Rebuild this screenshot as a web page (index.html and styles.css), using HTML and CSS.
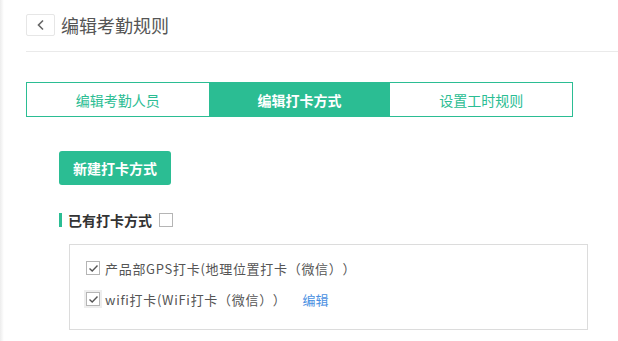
FILE: index.html
```html
<!DOCTYPE html>
<html lang="zh">
<head>
<meta charset="utf-8">
<link rel="stylesheet" href="styles.css">
</head>
<body>
<div class="page">
  <div class="header">
    <span class="back"><svg width="10" height="12" viewBox="0 0 10 12"><path d="M7 1.5 L2.5 6 L7 10.5" fill="none" stroke="#666" stroke-width="1.6"/></svg></span>
    <span class="title">编辑考勤规则</span>
  </div>
  <div class="tabs">
    <div class="tab">编辑考勤人员</div>
    <div class="tab active">编辑打卡方式</div>
    <div class="tab">设置工时规则</div>
  </div>
  <div class="content">
    <button class="btn">新建打卡方式</button>
    <div class="section">
      <span class="bar"></span>
      <span class="label">已有打卡方式</span>
      <span class="cb"></span>
    </div>
    <div class="list">
      <div class="row">
        <span class="cb checked"><svg width="11" height="9" viewBox="0 0 11 9"><path d="M1.5 4.5 L4.2 7 L9.5 1.5" fill="none" stroke="#555" stroke-width="1.4"/></svg></span>
        <span class="text">产品部GPS打卡(地理位置打卡（微信））</span>
      </div>
      <div class="row">
        <span class="cbwrap"><span class="cb checked"><svg width="11" height="9" viewBox="0 0 11 9"><path d="M1.5 4.5 L4.2 7 L9.5 1.5" fill="none" stroke="#555" stroke-width="1.4"/></svg></span></span>
        <span class="text">wifi打卡(WiFi打卡（微信））</span>
        <a class="edit">编辑</a>
      </div>
    </div>
  </div>
</div>
</body>
</html>
```
FILE: styles.css
```css
* { box-sizing: border-box; }
html, body { margin: 0; padding: 0; background: #fff; }
body {
  font-family: "Microsoft YaHei", "Noto Sans CJK SC", "Noto Sans", sans-serif;
  color: #555;
  text-spacing-trim: space-all;
}
.page {
  width: 618px;
  height: 341px;
  padding-left: 26px;
  background: linear-gradient(to right, #ececec 0, #f6f6f6 2px, #fff 4px);
  overflow: hidden;
}
.header {
  height: 52px;
  border-bottom: 1px solid #eaeaea;
  display: flex;
  align-items: center;
  padding-bottom: 2px;
}
.back {
  width: 29px;
  height: 22px;
  border: 1px solid #e6e6e6;
  border-radius: 2px;
  display: flex;
  align-items: center;
  justify-content: center;
}
.title {
  margin-left: 6px;
  font-size: 18px;
  color: #555;
  line-height: 22px;
}
.tabs {
  margin-top: 30px;
  width: 547px;
  height: 35px;
  border: 1px solid #2bbd93;
  display: flex;
}
.tab {
  flex: 1;
  display: flex;
  align-items: center;
  justify-content: center;
  font-size: 14px;
  color: #2bbd93;
}
.tab.active {
  background: #2bbd93;
  color: #fff;
  font-weight: bold;
}
.content {
  padding-left: 33px;
}
.btn {
  margin-top: 34px;
  width: 112px;
  height: 34px;
  border: none;
  border-radius: 3px;
  background: #2bbd93;
  color: #fff;
  font-family: inherit;
  font-size: 14px;
  font-weight: bold;
  padding: 0;
  display: block;
}
.section {
  margin-top: 27px;
  height: 16px;
  display: flex;
  align-items: center;
}
.bar {
  width: 3px;
  height: 14px;
  background: #2bbd93;
}
.label {
  margin-left: 6px;
  font-size: 14px;
  font-weight: bold;
  color: #333;
}
.section .cb { margin-left: 7px; }
.cb {
  width: 14px;
  height: 14px;
  border: 1px solid #b5b5b5;
  background: #fff;
  display: inline-flex;
  align-items: center;
  justify-content: center;
  flex: none;
}
.list {
  margin-top: 16px;
  margin-left: 10px;
  width: 519px;
  height: 86px;
  border: 1px solid #dcdcdc;
  padding: 11px 0 0 16px;
}
.row {
  height: 24px;
  display: flex;
  align-items: center;
  margin-bottom: 7px;
}
.cbwrap {
  background: #eee;
  padding: 2px;
  margin: -2px;
  display: inline-flex;
}
.text {
  margin-left: 5px;
  font-size: 13px;
  color: #555;
  letter-spacing: 0.7px;
}
.edit {
  margin-left: 16px;
  font-size: 13px;
  color: #4a90e2;
}
```
